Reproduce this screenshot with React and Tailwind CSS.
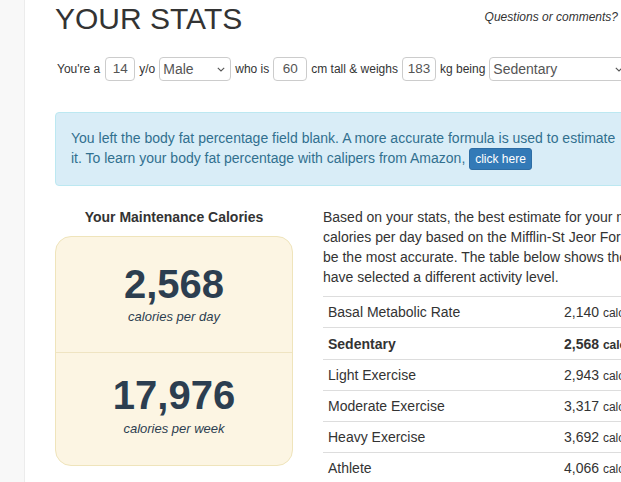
import React from "react";

function Chevron() {
  return (
    <svg width="8" height="5" viewBox="0 0 8 5" className="shrink-0">
      <polyline points="0.8,0.8 4,4 7.2,0.8" fill="none" stroke="#555" strokeWidth="1.1" />
    </svg>
  );
}

function Input({ value, w }) {
  return (
    <div
      className={`h-[24px] ${w} border border-[#ccc] rounded-[4px] flex items-center justify-center text-[13.5px] text-[#555] bg-white`}
    >
      {value}
    </div>
  );
}

function Select({ value, w }) {
  return (
    <div
      className={`h-[24px] ${w} shrink-0 border border-[#ccc] rounded-[4px] flex items-center justify-between pl-[3px] pr-[5px] text-[14px] text-[#555] bg-white`}
    >
      <span>{value}</span>
      <Chevron />
    </div>
  );
}

const rows = [
  ["Basal Metabolic Rate", "2,140", false],
  ["Sedentary", "2,568", true],
  ["Light Exercise", "2,943", false],
  ["Moderate Exercise", "3,317", false],
  ["Heavy Exercise", "3,692", false],
  ["Athlete", "4,066", false],
];

export default function App() {
  return (
    <div
      className="w-[621px] h-[482px] overflow-hidden flex bg-white text-[#333]"
      style={{ fontFamily: '"Liberation Sans", Arial, sans-serif' }}
    >
      <div className="w-[25px] shrink-0 bg-[#f8f8f8] border-r border-[#ececec]" />
      <div className="pl-[30px] flex flex-col shrink-0">
        {/* header */}
        <div className="w-[566px] flex justify-between items-start mt-[2px]">
          <div className="text-[30px] leading-[33px]">YOUR STATS</div>
          <div className="text-[12px] leading-[17px] italic mt-[7px] pr-[3px]">Questions or comments?</div>
        </div>

        {/* form row */}
        <div className="mt-[22px] flex items-center gap-[4px] text-[12px] whitespace-nowrap pl-[2px]">
          <span>You're a</span>
          <Input value="14" w="w-[30px] ml-[1px]" />
          <span>y/o</span>
          <Select value="Male" w="w-[72px]" />
          <span>who is</span>
          <Input value="60" w="w-[34px]" />
          <span>cm tall &amp; weighs</span>
          <Input value="183" w="w-[34px]" />
          <span>kg being</span>
          <Select value="Sedentary" w="w-[140px]" />
        </div>

        {/* alert */}
        <div className="mt-[31px] w-[700px] bg-[#d9edf7] border border-[#bce8f1] rounded-[4px] px-[15px] py-[15px] text-[14px] leading-[20px] text-[#31708f] whitespace-nowrap">
          You left the body fat percentage field blank. A more accurate formula is used to estimate&nbsp; this if you provide
          <br />
          it. To learn your body fat percentage with calipers from Amazon,{" "}
          <span className="inline-block bg-[#337ab7] border border-[#2e6da4] text-white text-[12px] leading-[18px] px-[5px] py-[1px] rounded-[3px]">
            click here
          </span>
        </div>

        {/* columns */}
        <div className="mt-[21px] flex gap-[30px]">
          <div className="w-[238px] shrink-0">
            <div className="text-[14px] leading-[20px] font-bold text-center">Your Maintenance Calories</div>
            <div className="mt-[9px] bg-[#fcf5e3] border border-[#efe4bb] rounded-[16px] text-[#2c3e50] text-center">
              <div className="pt-[25px] pb-[26px] border-b border-[#efe4c2]">
                <div className="text-[40px] leading-[44px] font-bold">2,568</div>
                <div className="mt-[2px] text-[13px] leading-[18px] italic">calories per day</div>
              </div>
              <div className="pt-[20px] pb-[27px]">
                <div className="text-[40px] leading-[44px] font-bold">17,976</div>
                <div className="mt-[3px] text-[13px] leading-[18px] italic">calories per week</div>
              </div>
            </div>
          </div>

          <div className="w-[520px] shrink-0">
            <div className="text-[14px] leading-[20px] whitespace-nowrap mb-[9px]">
              Based on your stats, the best estimate for your maintenance calories is 2,568
              <br />
              calories per day based on the Mifflin-St Jeor Formula, which is widely known to
              <br />
              be the most accurate. The table below shows the difference if you
              <br />
              have selected a different activity level.
            </div>
            <div className="text-[14px] leading-[20px]">
              {rows.map(([label, val, bold]) => (
                <div
                  key={label}
                  className={`flex border-t border-[#ddd] whitespace-nowrap ${bold ? "font-bold h-[32px] pt-[6px]" : "h-[31px] pt-[5px]"}`}
                >
                  <div className="w-[236px] px-[5px]">{label}</div>
                  <div className="px-[5px]">
                    {val} <span className="text-[12px] leading-[1]">calories</span>
                  </div>
                </div>
              ))}
            </div>
          </div>
        </div>
      </div>
    </div>
  );
}
